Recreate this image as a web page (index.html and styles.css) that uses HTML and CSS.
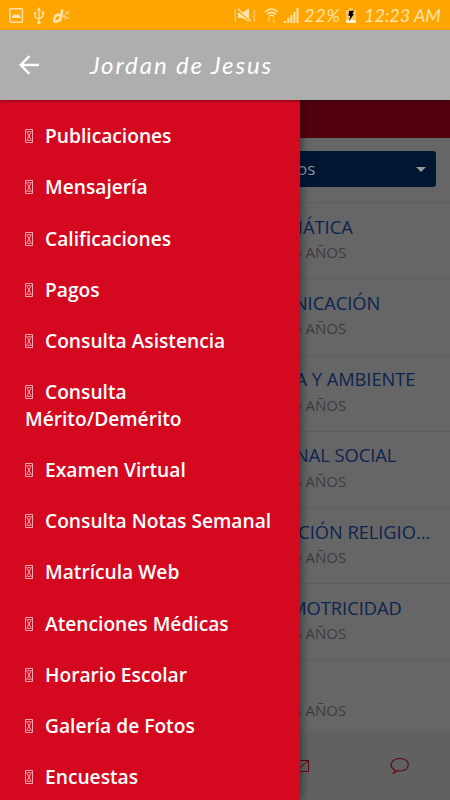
FILE: index.html
```html
<!DOCTYPE html>
<html lang="es">
<head>
<meta charset="utf-8">
<title>Jordan de Jesus</title>
<link rel="stylesheet" href="styles.css">
</head>
<body>
<div class="status">
  <svg class="status-left" width="75" height="30" viewBox="0 0 75 30" fill="none" stroke="#ffe4ae">
    <rect x="10" y="8.7" width="12.4" height="13.6" rx="1" stroke-width="1.4"/>
    <path d="M12 18v-2l3-2 2 1 2-1 2 4z" fill="#ffe4ae" stroke="none"/>
    <path d="M39 9v13M35 12v4q0 2 4 3M43 12v3q0 3-4 3" stroke-width="1.3"/>
    <path d="M36.8 10.5L39 7l2.2 3.5z" fill="#ffe4ae" stroke="none"/>
    <circle cx="39" cy="22.5" r="1.7" fill="#ffe4ae" stroke="none"/>
    <circle cx="35" cy="13" r="1.2" fill="#ffe4ae" stroke="none"/>
    <path d="M41.7 11.5h2.6v3h-2.6z" fill="#ffe4ae" stroke="none"/>
    <path d="M62.300 9.500l-2.200 11.800M60.600 15.500q-5-2-6.200 2.500t2 3.600 3.600-2.800" stroke-width="2.600"/>
    <path d="M65.500 11l3.500 3.500M69 11l-3.500 3.500M64 14v4M65 20q2-5 4-1M64 16l2 1" stroke-width="1"/>
  </svg>
  <div class="status-right">
    <svg width="68" height="30" viewBox="232 0 68 30" fill="none" stroke="#ffe4ae">
      <path d="M238 13h4l7-4.500V22l-7-4h-4z" fill="#ffe4ae" stroke="none"/>
      <path d="M237 9l14 13" stroke="#ffa500" stroke-width="2"/>
      <path d="M238 8.800l13 12.600" stroke-width="1.200"/>
      <path d="M236 9.500l-1.500 2 1.500 2-1.500 2 1.500 2-1.500 2 1.500 2M253.500 9.500l1.500 2-1.500 2 1.500 2-1.500 2 1.500 2-1.500 2" stroke-width="1"/>
      <path d="M265 12q6.500-6 13 0M267 14.300q4.500-4 9 0M269 16.500q2.500-2.500 5 0" stroke-width="1.600"/>
      <path d="M269 22v-4l-1.500 1.500M273.500 18v4l1.500-1.500" stroke-width="1.100" opacity=".6"/>
      <path d="M284 23v-2h2v2zM287.200 23v-5h2v5zM290.300 23v-8h2v8zM293.400 23V12h2v11zM296.500 23V8h2v15z" fill="#ffe4ae" stroke="none"/>
    </svg>
    <span class="percent">22%</span>
    <svg class="battery" width="12" height="30" viewBox="0 0 12 30">
      <path d="M1 10h3V8h4v2h3v13H1z" fill="#ffc965"/>
      <path d="M1 20h10v3H1z" fill="#fff0d0"/>
      <path d="M4 11l5-.5L7.500 14H9l-5 7 1.300-5H3.500z" fill="#000"/>
    </svg>
    <span class="clock">12:23 AM</span>
  </div>
</div>
<header class="bar">
  <svg class="back" width="20" height="20" viewBox="0 0 20 20" fill="none" stroke="#fff" stroke-width="2.400"><path d="M10.500 1L1.700 10l8.800 9M2 10h18"/></svg>
  <h1>Jordan de Jesus</h1>
</header>
<main class="stage">
  <section class="page">
    <div class="strip"></div>
    <div class="filter"><div class="select"><span>Todos</span><i class="caret"></i></div></div>
    <ul class="courses">
      <li><b>MATEMÁTICA</b><span>INICIAL 5 AÑOS</span></li>
      <li><b>COMUNICACIÓN</b><span>INICIAL 5 AÑOS</span></li>
      <li><b>CIENCIA Y AMBIENTE</b><span>INICIAL 5 AÑOS</span></li>
      <li><b>PERSONAL SOCIAL</b><span>INICIAL 5 AÑOS</span></li>
      <li><b>EDUCACIÓN RELIGIO...</b><span>INICIAL 5 AÑOS</span></li>
      <li><b>PSICOMOTRICIDAD</b><span>INICIAL 5 AÑOS</span></li>
      <li><b>ARTE</b><span>INICIAL 5 AÑOS</span></li>
    </ul>
    <footer class="tabs">
      <svg width="18" height="14" viewBox="0 0 18 14" fill="none" stroke="#68000f"><path d="M.5 1.500h17v11H.5zM.5 1.500l8.500 7 8.500-7"/></svg>
      <svg width="20" height="18" viewBox="0 0 20 18" fill="none" stroke="#68000f" stroke-width="1.100"><path d="M4.500 12.800C-2 9 1.500 1.500 10 1.500c11 0 11 12.500 0 12.500q-2 0-3.300-.4Q6 15.500 3.500 16.200q1.500-1.500 1-3.400z"/></svg>
    </footer>
  </section>
  <nav class="drawer">
    <svg class="defs" width="0" height="0"><symbol id="box" viewBox="0 0 8 14"><path d="M.5.5h7v13h-7zM1.500 2l5 10M6.500 2l-5 10M3 2.500h2M3 11.500h2" fill="none" stroke="#fbb8c0" stroke-width=".9"/></symbol></svg>
    <a><svg class="mark"><use href="#box"/></svg>Publicaciones</a>
    <a><svg class="mark"><use href="#box"/></svg>Mensajería</a>
    <a><svg class="mark"><use href="#box"/></svg>Calificaciones</a>
    <a><svg class="mark"><use href="#box"/></svg>Pagos</a>
    <a><svg class="mark"><use href="#box"/></svg>Consulta Asistencia</a>
    <a><svg class="mark"><use href="#box"/></svg>Consulta Mérito/Demérito</a>
    <a><svg class="mark"><use href="#box"/></svg>Examen Virtual</a>
    <a><svg class="mark"><use href="#box"/></svg>Consulta Notas Semanal</a>
    <a><svg class="mark"><use href="#box"/></svg>Matrícula Web</a>
    <a><svg class="mark"><use href="#box"/></svg>Atenciones Médicas</a>
    <a><svg class="mark"><use href="#box"/></svg>Horario Escolar</a>
    <a><svg class="mark"><use href="#box"/></svg>Galería de Fotos</a>
    <a><svg class="mark"><use href="#box"/></svg>Encuestas</a>
  </nav>
</main>
</body>
</html>
```
FILE: styles.css
```css
* { box-sizing: border-box; }
body {
  margin: 0;
  width: 450px;
  height: 800px;
  overflow: hidden;
  display: flex;
  flex-direction: column;
  font-family: "Open Sans", sans-serif;
}
svg { display: block; flex: none; }
.status {
  height: 30px;
  background: #ffa500;
  color: #ffe4ae;
  display: flex;
  justify-content: space-between;
  font: italic 18px/31px Lato, sans-serif;
}
.status-right { display: flex; width: 218px; }
.percent { width: 42px; padding-left: 4px; letter-spacing: .8px; white-space: nowrap; }
.battery { margin-left: 3px; }
.clock { margin-left: 7px; white-space: nowrap; }
.bar {
  height: 70px;
  background: #aeaeae;
  display: flex;
  align-items: center;
  padding-left: 19px;
  position: relative;
  z-index: 3;
  box-shadow: 0 1px 3px rgba(0, 0, 0, .4);
}
.back { margin-top: -1px; }
.bar h1 {
  margin: 0 0 0 51px;
  color: #fff;
  font: italic 24px/36px Lato, sans-serif;
  letter-spacing: 1.9px;
}
.stage { position: relative; flex: 1; overflow: hidden; }
.page {
  height: 700px;
  background: #666;
  display: flex;
  flex-direction: column;
}
.strip { height: 38px; background: #53000e; }
.filter { height: 65px; padding: 13px 14px 0; border-bottom: 1px solid #5e5e5e; }
.select {
  height: 36px;
  border-radius: 3px;
  background: #001633;
  color: #8c929a;
  display: flex;
  align-items: center;
  justify-content: space-between;
  padding: 0 10px 2px 253px;
  font-size: 17px;
}
.caret { border: 5px solid transparent; border-top-color: #999; border-bottom: 0; margin-top: 2px; }
.courses { margin: 0; padding: 0; list-style: none; height: 528px; overflow: hidden; }
.courses li {
  height: 76.25px;
  border-bottom: 1px solid #5e5e5e;
  padding: 10.6px 0 0 238.5px;
  display: flex;
  flex-direction: column;
}
.courses b { font-size: 18.3px; line-height: 26.5px; font-weight: 500; letter-spacing: -.03px; color: #0d2450; white-space: nowrap; }
.courses span { font-size: 15px; line-height: 24.5px; color: #3c3c3c; }
.tabs {
  flex: 1;
  background: #5f6261;
  display: flex;
  justify-content: flex-end;
  align-items: center;
  gap: 81px;
  padding-right: 40px;
}
.drawer {
  position: absolute;
  top: 0;
  left: 0;
  width: 300px;
  height: 700px;
  padding-top: 10.6px;
  background: #d40920;
  box-shadow: 0 0 10px rgba(0, 0, 0, .6);
  overflow: hidden;
}
.defs { position: absolute; }
.drawer a {
  display: block;
  padding: 12.5px 20px 12.5px 25px;
  color: #fff;
  font-size: 19.2px;
  font-weight: 600;
  line-height: 26.25px;
}
.mark {
  display: inline-block;
  width: 8px;
  height: 14px;
  margin-right: 12px;
  vertical-align: 0;
}
```
